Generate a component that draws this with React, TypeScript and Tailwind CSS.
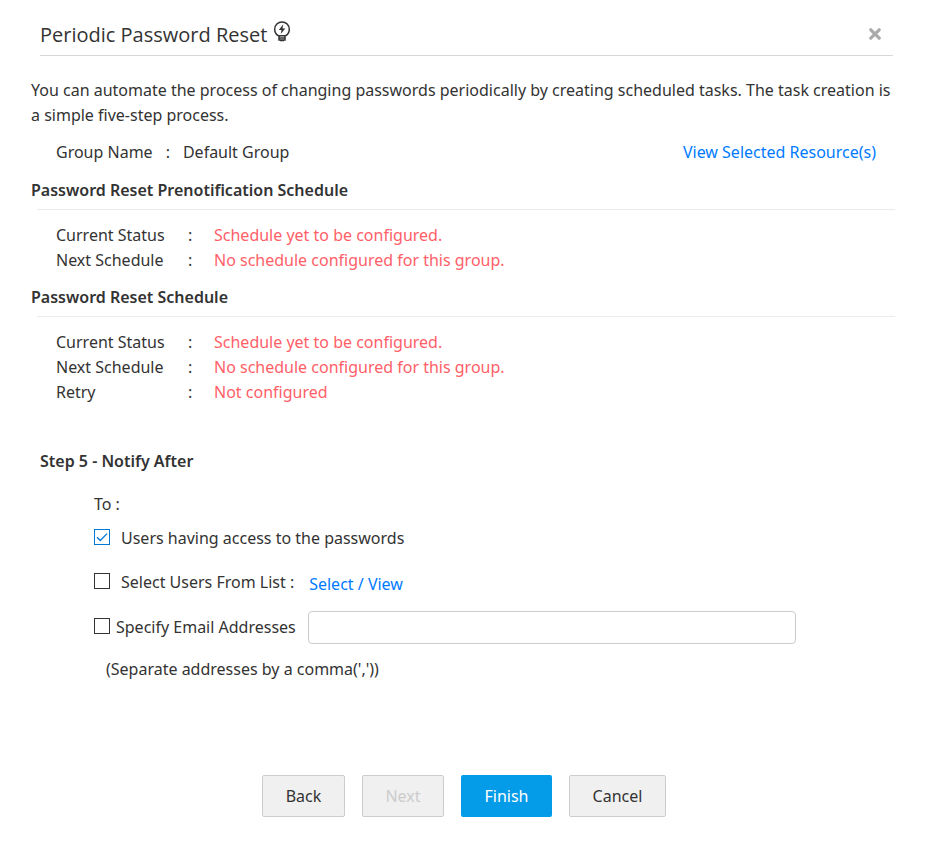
import React, { useState } from "react";

function Row({ label, value }: { label: string; value: string }) {
  return (
    <div className="flex">
      <dt className="w-[132px]">{label}</dt>
      <dd className="flex text-[#ff6068]">
        <span className="w-[26px] text-[#333]">:</span>
        {value}
      </dd>
    </div>
  );
}

function Schedule({ title, rows }: { title: string; rows: [string, string][] }) {
  return (
    <section>
      <h2 className="font-semibold">{title}</h2>
      <hr className="mt-1.5 ml-1.5 border-[#ebebeb]" />
      <dl className="mt-[13px] ml-[25px]">
        {rows.map(([label, value]) => (
          <Row key={label} label={label} value={value} />
        ))}
      </dl>
    </section>
  );
}

function Check({ id, on, set }: { id: string; on: boolean; set: (v: boolean) => void }) {
  return (
    <span className="relative mb-1 inline-flex size-4 shrink-0">
      <input
        id={id}
        type="checkbox"
        checked={on}
        onChange={(e) => set(e.target.checked)}
        className="size-4 appearance-none border border-[#333] bg-white checked:border-[#0078d7]"
      />
      {on && (
        <svg viewBox="0 0 16 16" className="pointer-events-none absolute inset-0 size-4" fill="none" stroke="#0078d7" strokeWidth="1.3">
          <path d="M3 8.2 6.3 11.5 13 4.6" />
        </svg>
      )}
    </span>
  );
}

const plain = "h-[42px] rounded-xs border border-[#ccc] bg-[#f0f0f0]";

export default function App() {
  const [users, setUsers] = useState(true);
  const [list, setList] = useState(false);
  const [mail, setMail] = useState(false);
  return (
    <main className="bg-white pr-[35px] pb-8 pl-[31px] pt-5 font-['Noto_Sans',sans-serif] text-base leading-[25px] text-[#333]">
      <header className="mr-0.5 ml-[9px] flex h-9 items-start border-b border-[#d8d8d8]">
        <h1 className="font-['Open_Sans',sans-serif] text-xl leading-[29px]">Periodic Password Reset</h1>
        <svg viewBox="0 0 18 22" className="ml-1.5 h-[22px] w-[18px]" fill="none" stroke="#333" strokeWidth="1.5">
          <path d="M6 19.900v-3.700C3.200 14.600 1.700 11.900 1.700 9.200a7.300 7.300 0 0 1 14.600 0c0 2.700-1.500 5.400-4.300 7v3.700zM5.800 15.800h6.400M6 18h6M7 20.500h4" />
          <path d="M10.300 4.300 5.800 9.900h2.700l-.8 4L12.300 8.500H9.500z" fill="#333" stroke="none" />
        </svg>
        <button aria-label="Close" className="mt-2 mr-3 ml-auto">
          <svg viewBox="0 0 12 12" className="size-3" stroke="#aaa" strokeWidth="3.2" strokeLinecap="round">
            <path d="m1.800 1.800 8.400 8.400M10.200 1.800 1.800 10.200" />
          </svg>
        </button>
      </header>

      <p className="mt-[22px]">
        You can automate the process of changing passwords periodically by creating scheduled tasks. The task creation is a simple five-step process.
      </p>
      <div className="mt-3 mr-[19px] ml-[25px] flex">
        <span>Group Name</span>
        <span className="ml-[13px]">:</span>
        <span className="ml-[13px]">Default Group</span>
        <a href="#resources" className="ml-auto text-[#007bff]">View Selected Resource(s)</a>
      </div>

      <div className="mt-[13px] flex flex-col gap-3">
        <Schedule
          title="Password Reset Prenotification Schedule"
          rows={[["Current Status", "Schedule yet to be configured."], ["Next Schedule", "No schedule configured for this group."]]}
        />
        <Schedule
          title="Password Reset Schedule"
          rows={[["Current Status", "Schedule yet to be configured."], ["Next Schedule", "No schedule configured for this group."], ["Retry", "Not configured"]]}
        />
      </div>

      <section className="mt-11 ml-[9px]">
        <h2 className="font-semibold">Step 5 - Notify After</h2>
        <div className="mt-[18px] ml-[54px]">
          <p>To :</p>
          <div className="mt-[9px] flex items-center gap-[11px]">
            <Check id="users" on={users} set={setUsers} />
            <label htmlFor="users">Users having access to the passwords</label>
          </div>
          <div className="mt-[17px] flex items-center gap-[11px]">
            <Check id="list" on={list} set={setList} />
            <label htmlFor="list">Select Users From List :</label>
            <a href="#select" className="mt-1 ml-1 text-[#007bff]">Select / View</a>
          </div>
          <div className="mt-3.5 flex items-center">
            <Check id="mail" on={mail} set={setMail} />
            <label htmlFor="mail" className="ml-1.5">Specify Email Addresses</label>
            <input aria-label="Email addresses" className="mr-[99px] ml-3 h-[33px] min-w-0 flex-1 rounded-sm border border-[#ccc] px-2" />
          </div>
          <p className="mt-[13px] ml-3">(Separate addresses by a comma(','))</p>
        </div>
      </section>

      <footer className="mt-[93px] ml-0.5 flex justify-center gap-[17px]">
        <button className={`${plain} w-[83px]`}>Back</button>
        <button disabled className={`${plain} w-[82px] text-[#ccc]`}>Next</button>
        <button className="h-[42px] w-[91px] rounded-xs bg-[#049be8] text-white">Finish</button>
        <button className={`${plain} w-[97px]`}>Cancel</button>
      </footer>
    </main>
  );
}
